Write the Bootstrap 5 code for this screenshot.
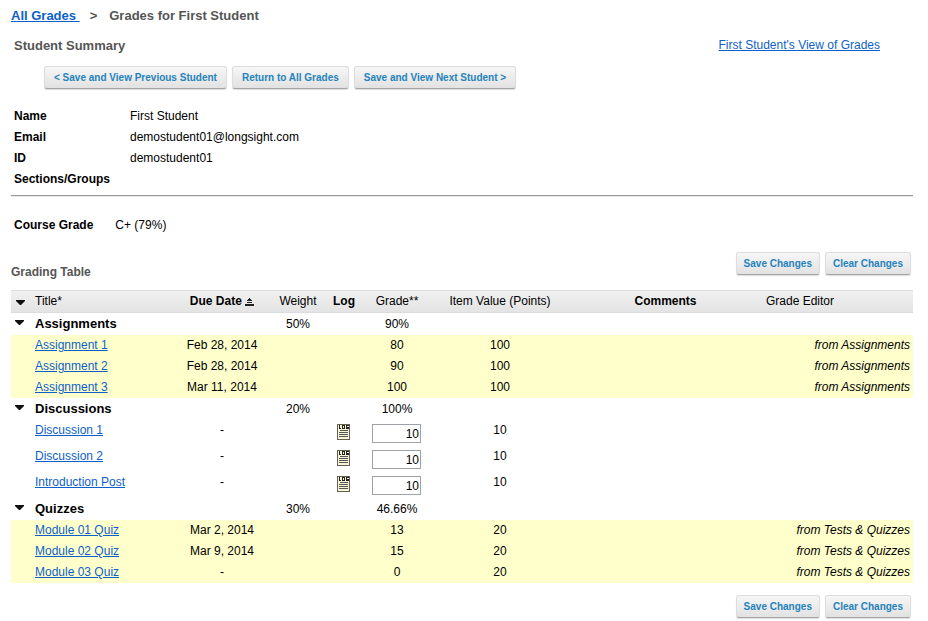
<!DOCTYPE html>
<html lang="en">
<head>
<meta charset="utf-8">
<meta name="viewport" content="width=device-width, initial-scale=1">
<title>Grades for First Student</title>
<link href="https://cdn.jsdelivr.net/npm/bootstrap@5.3.0/dist/css/bootstrap.min.css" rel="stylesheet">
<style>
body { font-family: "Liberation Sans", Arial, sans-serif; font-size: 12px; line-height: 21px; color: #000; background: #fff; }
.page { padding: 5px 15px 4px 11px; }
a { color: #0e5fc9; }
h1, h2, h3 { font-weight: 700; line-height: 21px; color: #555; margin: 0; }
h1, h2 { font-size: 13px; }
h3 { font-size: 12px; }
.crumb-mark { padding: 0 8px 0 10px; }
.heading-row { padding: 9px 33px 0 3px; }
.tool-btn { font-size: 10px; font-weight: 700; line-height: 15px; color: #2683bc; padding: 3px 7px; border: 1px solid #ddd; border-bottom-color: #a4a4a4; border-radius: 3px; background: linear-gradient(#f6f6f6, #e2e2e2); box-shadow: 0 1px 1px #ddd; }
.tool-btn:hover { color: #17608d; background: #e2e2e2; border-color: #bbb; }
.btn-row { gap: 5px; }
.student-nav { padding: 10px 0 0 33px; }
.student-nav .tool-btn { padding-left: 9px; padding-right: 9px; }
.save-row { padding-right: 2px; }
.details { display: grid; grid-template-columns: 116px 1fr; padding: 17px 0 0 3px; margin: 0; }
.details dt, .details dd { margin: 0; }
.rule { margin: 5px 0 0; border-top: 1px solid #9a9a9a; border-bottom: 1px solid #e8e8e8; opacity: 1; }
.course { padding: 18px 0 0 3px; gap: 22px; }
.table-head { padding: 16px 0 7px; }
.table-head h3 { padding-top: 10px; }
.grades { table-layout: fixed; line-height: 21px; border-collapse: separate; border-spacing: 0; }
.grades th, .grades td { padding: 0; vertical-align: top; text-align: center; font-weight: 400; height: 21px; }
.grades .start { text-align: left; }
.grades thead tr { background: linear-gradient(#f1f1f1, #e3e3e3); }
.grades thead th { height: 23px; border-top: 1px solid #dcdcdc; border-bottom: 1px solid #dcdcdc; }
.grades thead .strong { font-weight: 700; }
.grades .group th, .grades .group td { height: 22px; line-height: 22px; }
.grades .group th { font-size: 13px; font-weight: 700; }
.grades .auto { background: #ffc; }
.grades .manual td { height: 26px; }
.grades .source { text-align: right; font-style: italic; padding-right: 3px; white-space: nowrap; }
.c-arrow { width: 24px; } .c-title { width: 142px; } .c-due { width: 90px; } .c-weight { width: 62px; }
.c-log { width: 30px; } .c-grade { width: 76px; } .c-value { width: 130px; } .c-editor { width: 147px; }
.plain { display: block; border: 0; background: none; padding: 7px 0 0 4px; line-height: 1; }
.plain svg, .log-btn svg { display: block; }
thead .plain { padding: 9px 0 0 5px; }
.log-btn { display: block; border: 0; background: none; padding: 4px 0 0 8px; }
.score { display: block; width: 49px; height: 19px; margin: 4px 0 0 13px; border: 1px solid #a0a0a8; padding: 1px 1px 0; text-align: right; line-height: 16px; }
</style>
</head>
<body>
<svg class="d-none" aria-hidden="true">
  <symbol id="down" viewBox="0 0 9 5"><path d="M0 0h9v1L5 5H4L0 1z" fill="#111"/></symbol>
  <symbol id="sort" viewBox="0 0 9 8"><path d="M4 0h1v1h1v1h1v1H2V2h1V1h1zM2 4h5v1H2zM0 6h9v2H0z" fill="#222"/></symbol>
  <symbol id="log" viewBox="0 0 13 16">
    <path d="M0 0h13v16H0z" fill="#666052"/><path d="M1 1h11v14H1z" fill="#f8f4d8"/>
    <path d="M2 1h1v3h1v1H2zM5 1h3v4H5zM9 1h3v1h-2v1h2v2H9z" fill="#222"/><path d="M6 2h1v2H6z" fill="#f8f4d8"/>
    <path d="M3 6h8v1H3zM2 8h9v1H2zM2 10h9v1H2zM2 12h9v1H2z" fill="#555"/>
  </symbol>
</svg>
<main class="page">
  <nav aria-label="Breadcrumb"><h1 class="d-flex"><a href="#">All Grades&nbsp;</a><span class="crumb-mark">&gt;</span><span class="ps-1">Grades for First Student</span></h1></nav>
  <div class="d-flex justify-content-between heading-row">
    <h2>Student Summary</h2>
    <a href="#">First Student's View of Grades</a>
  </div>
  <div class="d-flex btn-row student-nav">
    <button type="button" class="btn tool-btn">&lt; Save and View Previous Student</button>
    <button type="button" class="btn tool-btn">Return to All Grades</button>
    <button type="button" class="btn tool-btn">Save and View Next Student &gt;</button>
  </div>
  <dl class="details">
    <dt>Name</dt><dd>First Student</dd>
    <dt>Email</dt><dd>demostudent01@longsight.com</dd>
    <dt>ID</dt><dd>demostudent01</dd>
    <dt>Sections/Groups</dt><dd></dd>
  </dl>
  <hr class="rule">
  <div class="d-flex course"><span class="fw-bold">Course Grade</span><span>C+ (79%)</span></div>
  <div class="d-flex justify-content-between align-items-start table-head">
    <h3>Grading Table</h3>
    <div class="d-flex btn-row save-row">
      <button type="button" class="btn tool-btn">Save Changes</button>
      <button type="button" class="btn tool-btn">Clear Changes</button>
    </div>
  </div>
  <table class="grades w-100">
    <colgroup><col class="c-arrow"><col class="c-title"><col class="c-due"><col class="c-weight"><col class="c-log"><col class="c-grade"><col class="c-value"><col><col class="c-editor"></colgroup>
    <thead>
      <tr><th><button class="plain" type="button" aria-label="Collapse all"><svg width="9" height="5"><use href="#down"/></svg></button></th><th class="start">Title*</th><th class="strong">Due Date <svg width="9" height="8"><use href="#sort"/></svg></th><th>Weight</th><th class="strong">Log</th><th>Grade**</th><th>Item Value (Points)</th><th class="strong">Comments</th><th class="start">Grade Editor</th></tr>
    </thead>
    <tbody>
      <tr class="group"><td><button class="plain" type="button" aria-label="Collapse Assignments"><svg width="9" height="5"><use href="#down"/></svg></button></td><th class="start" scope="row">Assignments</th><td></td><td>50%</td><td></td><td>90%</td><td></td><td></td><td></td></tr>
      <tr class="auto"><td></td><td class="start"><a href="#">Assignment 1</a></td><td>Feb 28, 2014</td><td></td><td></td><td>80</td><td>100</td><td></td><td class="source">from Assignments</td></tr>
      <tr class="auto"><td></td><td class="start"><a href="#">Assignment 2</a></td><td>Feb 28, 2014</td><td></td><td></td><td>90</td><td>100</td><td></td><td class="source">from Assignments</td></tr>
      <tr class="auto"><td></td><td class="start"><a href="#">Assignment 3</a></td><td>Mar 11, 2014</td><td></td><td></td><td>100</td><td>100</td><td></td><td class="source">from Assignments</td></tr>
    </tbody>
    <tbody>
      <tr class="group"><td><button class="plain" type="button" aria-label="Collapse Discussions"><svg width="9" height="5"><use href="#down"/></svg></button></td><th class="start" scope="row">Discussions</th><td></td><td>20%</td><td></td><td>100%</td><td></td><td></td><td></td></tr>
      <tr class="manual"><td></td><td class="start"><a href="#">Discussion 1</a></td><td>-</td><td></td><td><button class="log-btn" type="button" aria-label="Log for Discussion 1"><svg width="13" height="16"><use href="#log"/></svg></button></td><td><input class="score" type="text" value="10" aria-label="Grade for Discussion 1"></td><td>10</td><td></td><td></td></tr>
      <tr class="manual"><td></td><td class="start"><a href="#">Discussion 2</a></td><td>-</td><td></td><td><button class="log-btn" type="button" aria-label="Log for Discussion 2"><svg width="13" height="16"><use href="#log"/></svg></button></td><td><input class="score" type="text" value="10" aria-label="Grade for Discussion 2"></td><td>10</td><td></td><td></td></tr>
      <tr class="manual"><td></td><td class="start"><a href="#">Introduction Post</a></td><td>-</td><td></td><td><button class="log-btn" type="button" aria-label="Log for Introduction Post"><svg width="13" height="16"><use href="#log"/></svg></button></td><td><input class="score" type="text" value="10" aria-label="Grade for Introduction Post"></td><td>10</td><td></td><td></td></tr>
    </tbody>
    <tbody>
      <tr class="group"><td><button class="plain" type="button" aria-label="Collapse Quizzes"><svg width="9" height="5"><use href="#down"/></svg></button></td><th class="start" scope="row">Quizzes</th><td></td><td>30%</td><td></td><td>46.66%</td><td></td><td></td><td></td></tr>
      <tr class="auto"><td></td><td class="start"><a href="#">Module 01 Quiz</a></td><td>Mar 2, 2014</td><td></td><td></td><td>13</td><td>20</td><td></td><td class="source">from Tests &amp; Quizzes</td></tr>
      <tr class="auto"><td></td><td class="start"><a href="#">Module 02 Quiz</a></td><td>Mar 9, 2014</td><td></td><td></td><td>15</td><td>20</td><td></td><td class="source">from Tests &amp; Quizzes</td></tr>
      <tr class="auto"><td></td><td class="start"><a href="#">Module 03 Quiz</a></td><td>-</td><td></td><td></td><td>0</td><td>20</td><td></td><td class="source">from Tests &amp; Quizzes</td></tr>
    </tbody>
  </table>
  <div class="d-flex justify-content-end btn-row save-row pt-2 mt-1">
    <button type="button" class="btn tool-btn">Save Changes</button>
    <button type="button" class="btn tool-btn">Clear Changes</button>
  </div>
</main>
<script src="https://cdn.jsdelivr.net/npm/bootstrap@5.3.0/dist/js/bootstrap.bundle.min.js"></script>
</body>
</html>
